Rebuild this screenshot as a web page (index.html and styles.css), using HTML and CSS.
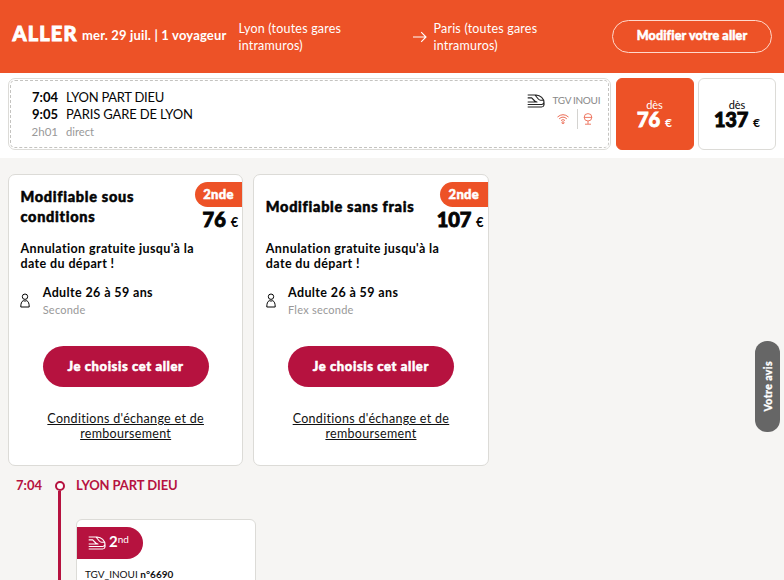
FILE: index.html
```html
<!DOCTYPE html>
<html lang="fr">
<head>
<meta charset="utf-8">
<title>Aller Lyon - Paris</title>
<link rel="stylesheet" href="styles.css">
</head>
<body>
<svg class="defs" width="0" height="0">
  <symbol id="train" viewBox="0 0 18 14"><path d="M.7 1H9c4.500.3 8 3.500 8 7.500V11q-.3 2-2.500 2H.7M.7 3.800h4l3 3.200q1 1 2.300 1H.7M8 1l3.300 4q1 1.200 2.300 1.200h2.400M.7 10.500h14q1.500 0 2.300-2" fill="none" stroke="currentColor" stroke-width="1.150" stroke-linejoin="round"/></symbol>
  <symbol id="person" viewBox="0 0 10 15"><g fill="none" stroke="currentColor" stroke-width="1"><circle cx="5" cy="3.700" r="2.700"/><path d="M3.200 7.700C1.500 8.500.8 10.500.8 14h8.400c0-3.500-.7-5.500-2.400-6.300-1 .5-2.600.5-3.600 0z" stroke-linejoin="round"/></g></symbol>
</svg>
<header class="top">
  <h1 class="way">ALLER</h1>
  <p class="date">mer. 29 juil. | 1 voyageur</p>
  <p class="city from">Lyon (toutes gares<br>intramuros)</p>
  <svg class="arrow" width="14" height="12" viewBox="0 0 14 12"><path d="M0 6h13M8.200 1.200L13 6l-4.800 4.800" fill="none" stroke="#fff" stroke-width="1.100"/></svg>
  <p class="city to">Paris (toutes gares<br>intramuros)</p>
  <button class="modify">Modifier votre aller</button>
</header>
<section class="offer">
  <div class="trip"><div class="trip-in">
    <div class="times">
      <b>7:04</b><span class="station s1">LYON PART DIEU</span>
      <b>9:05</b><span class="station s2">PARIS GARE DE LYON</span>
      <span class="muted">2h01</span><span class="muted direct">direct</span>
    </div>
    <div class="carrier">
      <svg class="train" width="18" height="14"><use href="#train"/></svg>
      <div class="brand">
        <span class="inoui">TGV INOUI</span>
        <div class="services">
          <svg width="12" height="12" viewBox="0 0 12 12"><g fill="none" stroke="#ec6c55" stroke-width="1"><path d="M.5 4Q6-.6 11.500 4M2.200 5.800Q6 2.400 9.800 5.800M4 7.500Q6 5.700 8 7.500"/><circle cx="6" cy="9.700" r="1"/></g></svg>
          <i class="sep"></i>
          <svg width="10" height="12" viewBox="0 0 10 12"><path d="M5 .6a3.800 3.700 0 1 1 0 7.400 3.800 3.700 0 1 1 0-7.400zM1 4.400h8M5 8v3M2 11.200h6" fill="none" stroke="#ec6c55" stroke-width=".9"/></svg>
        </div>
      </div>
    </div>
  </div></div>
  <div class="fare on"><span class="des">dès</span><span class="amount"><b class="big">76</b><b class="eur">€</b></span></div>
  <div class="fare"><span class="des">dès</span><span class="amount"><b class="big wide">137</b><b class="eur">€</b></span></div>
</section>
<main>
  <div class="cards">
    <article class="card">
      <div class="head"><h2>Modifiable sous<br>conditions</h2>
        <div class="price"><span class="badge">2nde</span><span class="amount"><b class="big">76</b><b class="eur">€</b></span></div></div>
      <p class="note">Annulation gratuite jusqu'à la<br>date du départ !</p>
      <div class="who"><svg width="10" height="15"><use href="#person"/></svg><div><b class="adult">Adulte 26 à 59 ans</b><span class="class">Seconde</span></div></div>
      <button class="choose">Je choisis cet aller</button>
      <a class="terms" href="#">Conditions d'échange et de<br>remboursement</a>
    </article>
    <article class="card">
      <div class="head"><h2>Modifiable sans frais</h2>
        <div class="price"><span class="badge">2nde</span><span class="amount"><b class="big wide">107</b><b class="eur">€</b></span></div></div>
      <p class="note">Annulation gratuite jusqu'à la<br>date du départ !</p>
      <div class="who"><svg width="10" height="15"><use href="#person"/></svg><div><b class="adult">Adulte 26 à 59 ans</b><span class="class">Flex seconde</span></div></div>
      <button class="choose">Je choisis cet aller</button>
      <a class="terms" href="#">Conditions d'échange et de<br>remboursement</a>
    </article>
  </div>
  <section class="journey">
    <b class="hour">7:04</b>
    <div class="rail"><i class="dot"></i><i class="line"></i></div>
    <div class="stop">
      <b class="depart">LYON PART DIEU</b>
      <div class="segment">
        <div class="tag"><svg width="18" height="14"><use href="#train"/></svg><b>2</b><span class="nd">nd</span></div>
        <p class="number"><span>TGV_INOUI</span> <b>n°6690</b></p>
      </div>
    </div>
  </section>
</main>
<button class="feedback"><span>Votre avis</span></button>
</body>
</html>
```
FILE: styles.css
```css
* { box-sizing: border-box; }
body { margin: 0; height: 580px; overflow: hidden; background: #f6f5f3; color: #050505; font: 13px/17px Lato, sans-serif; font-variant-ligatures: none; white-space: nowrap; }
h1, h2, p { margin: 0; }
svg { display: block; flex: none; }
button { border: 0; padding: 0; font-family: inherit; white-space: nowrap; font-variant-ligatures: none; }
.defs { display: none; }
.way, .modify, .big, h2, .badge, .choose { -webkit-text-stroke: .5px currentColor; }

.top { height: 73px; background: #ed5227; color: #fff; display: flex; align-items: center; padding: 0 12px; }
.way { width: 70px; font-size: 20px; font-weight: 900; line-height: 24px; letter-spacing: 1.100px; margin-top: -8px; text-indent: .6px; -webkit-text-stroke-width: .9px; }
.date { width: 156.500px; font-weight: 700; font-size: 13px; letter-spacing: .17px; margin-top: -3px; }
.city { font-size: 12.500px; margin-top: 1px; letter-spacing: .2px; }
.from { width: 174px; }
.arrow { margin-right: 7px; }
.modify { width: 160px; height: 33px; margin-left: auto; border: 1px solid #ffd9cc; border-radius: 17px; background: none; color: #fff; font-weight: 900; font-size: 12.500px; letter-spacing: .15px; margin-top: -1px; padding-bottom: 1px; }

.offer { height: 85px; background: #fff; padding: 5px 8px 8px; display: flex; }
.trip { width: 603px; height: 72px; border: 1px solid #dcdbd7; border-radius: 7px; padding: 1px; margin-right: 4.500px; }
.trip-in { height: 100%; border: 1px dashed #c4c3c0; border-radius: 5px; padding: 8px 8px 0 21px; display: flex; justify-content: space-between; }
.times { display: grid; grid-template-columns: 26px auto; column-gap: 8px; align-content: start; justify-items: end; }
.times > :nth-child(even) { justify-self: start; }
.s1 { letter-spacing: -.27px; }
.s2 { letter-spacing: -.15px; }
.muted { color: #999; font-size: 11.500px; }
.direct { font-size: 11.200px; }
.carrier { display: flex; gap: 8px; padding-top: 4px; }
.train { color: #222; margin-top: 1px; }
.brand { width: 47.500px; }
.inoui { display: block; font-size: 10px; color: #888; line-height: 15px; letter-spacing: -.3px; }
.services { display: flex; align-items: center; gap: 6px; margin: 1px 0 0 4px; }
.services svg { margin-top: -1px; }
.services .sep { width: 1px; height: 20px; background: #d4d3d0; margin: 0 -1px 0 2px; }
.fare { width: 78px; height: 72px; border: 1px solid #dcdbd7; border-radius: 6px; display: flex; flex-direction: column; align-items: center; margin-right: 4.500px; padding-top: 19px; }
.fare:last-child { margin-right: 0; }
.fare.on { background: #ed5227; border-color: #ed5227; color: #fff; }
.des { font-size: 11px; line-height: 13px; }
.amount { display: flex; align-items: baseline; gap: 5px; line-height: 16px; }
.big { font-size: 20px; font-weight: 900; -webkit-text-stroke-width: .9px; }
.fare .big { line-height: 16px; }
.wide { letter-spacing: -.2px; }
.eur { font-size: 12px; }

main { padding: 16px 8px 0; }
.cards { display: flex; gap: 10px; }
.card { width: 235.300px; height: 291.500px; background: #fff; border: 1px solid #dcdbd7; border-radius: 7px; padding-left: 11.500px; }
.head { display: flex; justify-content: space-between; align-items: center; height: 64px; margin-top: -1px; }
h2 { font-size: 14.500px; font-weight: 900; line-height: 20px; letter-spacing: .7px; margin-top: 1px; }
.price { display: flex; flex-direction: column; align-items: flex-end; padding-top: 4px; }
.badge { width: 47.500px; height: 25px; border-radius: 13px 0 0 13px; background: #ed5227; color: #fff; font-size: 13px; font-weight: 900; line-height: 24px; text-align: center; letter-spacing: .3px; }
.price .amount { padding-right: 4px; line-height: 24px; }
.price .eur { font-size: 13px; }
.note { margin-top: 4px; font-weight: 700; font-size: 12.500px; line-height: 14.500px; letter-spacing: .38px; }
.who { display: flex; gap: 12.500px; margin-top: 12.500px; margin-left: -.3px; align-items: center; height: 34px; }
.adult, .class { display: block; }
.adult { font-size: 12.500px; letter-spacing: .38px; }
.class { font-size: 11px; color: #999; letter-spacing: .23px; }
.choose { display: block; width: 166px; height: 41px; border-radius: 21px; margin: 28.500px 0 0 22px; padding-bottom: 2px; background: #b6123f; color: #fff; font-weight: 900; font-size: 13px; letter-spacing: .6px; }
.terms { display: block; margin: 25px 11.500px 0 0; text-align: center; color: #111; font-size: 12.500px; line-height: 14.500px; letter-spacing: .31px; }

.journey { display: flex; padding: 10.500px 0 0 8px; color: #b6123f; height: 116px; }
.hour { width: 38px; font-size: 13px; line-height: 18px; }
.rail { width: 11px; display: flex; flex-direction: column; align-items: center; padding-top: 5px; margin-right: 11px; }
.dot { width: 10px; height: 10px; border: 2.500px solid #b6123f; border-radius: 50%; background: #fff; flex: none; }
.line { width: 3px; flex: 1; background: #b6123f; }
.depart { display: block; font-size: 13px; line-height: 18px; letter-spacing: -.1px; }
.segment { width: 180px; height: 80px; margin-top: 25px; background: #fff; border: 1px solid #dcdbd7; border-radius: 6px; padding-top: 7px; color: #111; }
.tag { width: 66px; height: 32px; border-radius: 0 16px 16px 0; background: #b6123f; color: #fff; display: flex; align-items: center; padding-left: 11px; }
.tag b { font-size: 15px; margin-left: 3px; margin-top: -3px; }
.nd { font-size: 10px; margin-top: -8px; }
.number { margin: 7px 0 0 8px; font-size: 10px; }

.feedback { position: fixed; right: 4px; top: 341px; width: 25px; height: 91px; border-radius: 12px; background: #666; color: #fff; display: flex; align-items: center; justify-content: center; }
.feedback span { writing-mode: vertical-rl; transform: rotate(180deg); font-size: 10.500px; font-weight: 900; line-height: 14px; letter-spacing: .4px; -webkit-text-stroke: .3px currentColor; }
```
